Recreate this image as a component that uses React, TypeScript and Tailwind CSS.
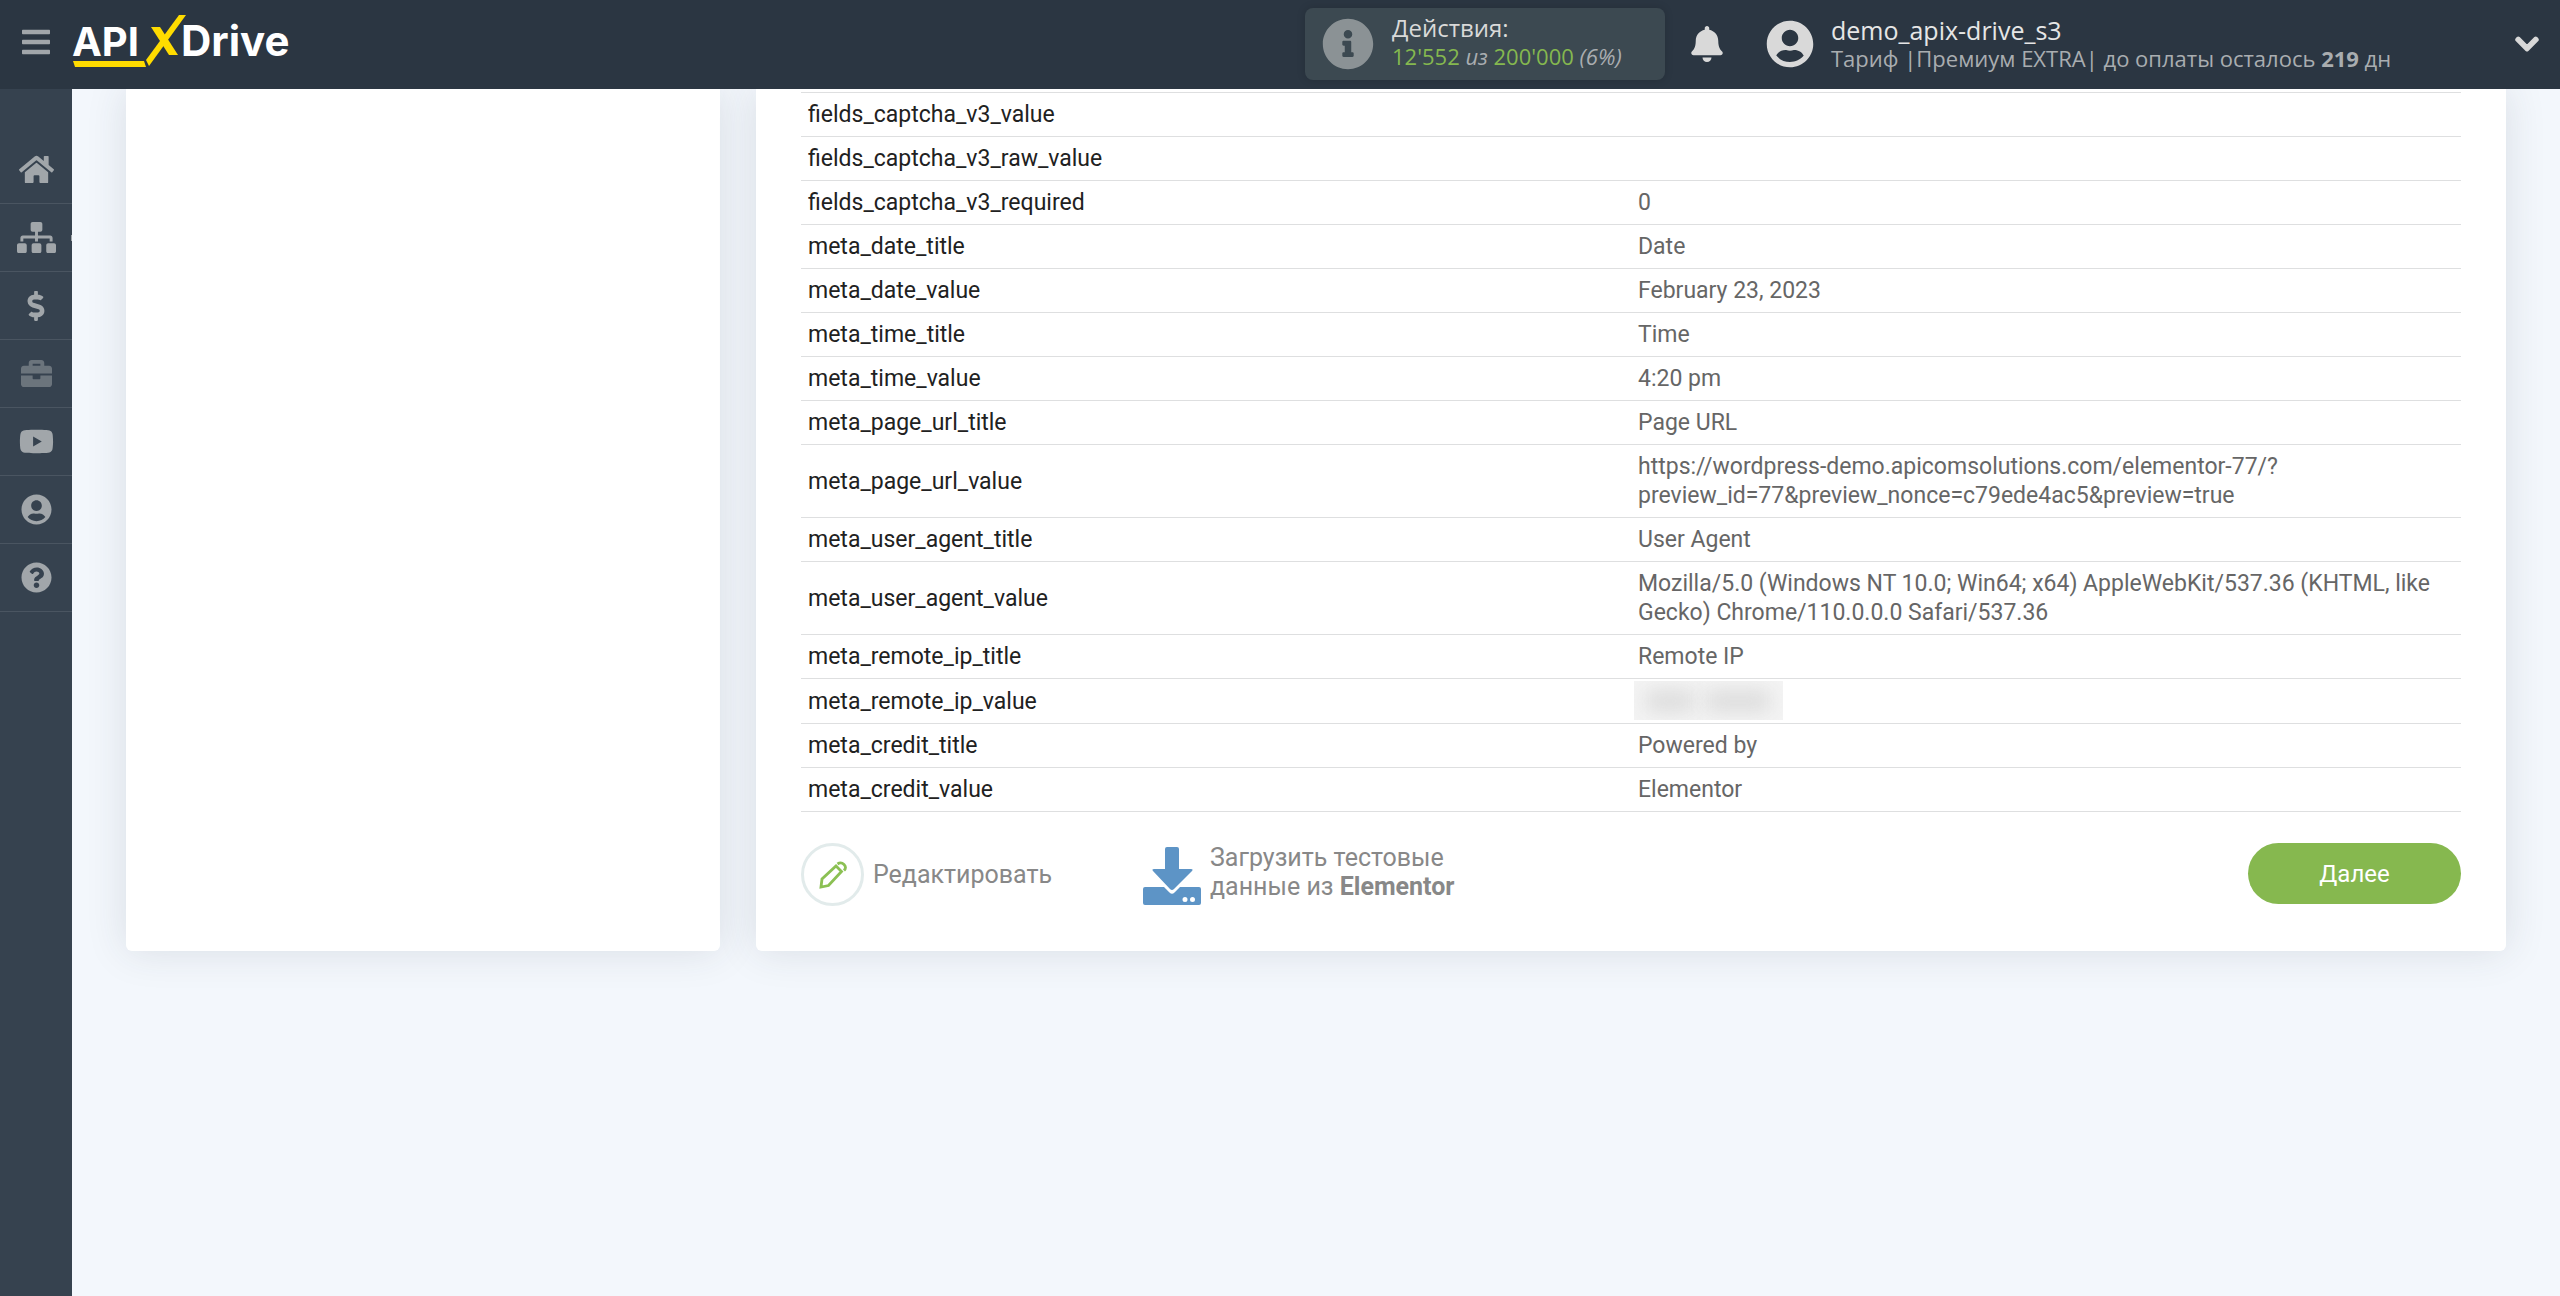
import React from "react";
import {
  FaBars,
  FaBell,
  FaBriefcase,
  FaChevronDown,
  FaDollarSign,
  FaHome,
  FaInfoCircle,
  FaQuestionCircle,
  FaSitemap,
  FaUserCircle,
  FaYoutube,
} from "react-icons/fa";

const rows: { name: string; value: string; hidden?: boolean }[] = [
  { name: "fields_captcha_v3_value", value: "" },
  { name: "fields_captcha_v3_raw_value", value: "" },
  { name: "fields_captcha_v3_required", value: "0" },
  { name: "meta_date_title", value: "Date" },
  { name: "meta_date_value", value: "February 23, 2023" },
  { name: "meta_time_title", value: "Time" },
  { name: "meta_time_value", value: "4:20 pm" },
  { name: "meta_page_url_title", value: "Page URL" },
  {
    name: "meta_page_url_value",
    value:
      "https://wordpress-demo.apicomsolutions.com/elementor-77/?preview_id=77&preview_nonce=c79ede4ac5&preview=true",
  },
  { name: "meta_user_agent_title", value: "User Agent" },
  {
    name: "meta_user_agent_value",
    value:
      "Mozilla/5.0 (Windows NT 10.0; Win64; x64) AppleWebKit/537.36 (KHTML, like Gecko) Chrome/110.0.0.0 Safari/537.36",
  },
  { name: "meta_remote_ip_title", value: "Remote IP" },
  { name: "meta_remote_ip_value", value: "", hidden: true },
  { name: "meta_credit_title", value: "Powered by" },
  { name: "meta_credit_value", value: "Elementor" },
];

const navItems = [
  { label: "Главная", icon: <FaHome size={35} /> },
  { label: "Связи", icon: <FaSitemap size={39} />, submenu: true },
  { label: "Оплата", icon: <FaDollarSign size={30} /> },
  { label: "Услуги", icon: <FaBriefcase size={31} className="opacity-50" /> },
  { label: "Видео", icon: <FaYoutube size={35} /> },
  { label: "Профиль", icon: <FaUserCircle size={31} /> },
  { label: "Помощь", icon: <FaQuestionCircle size={31} /> },
];

function Logo() {
  return (
    <svg width="224" height="54" viewBox="0 0 224 54" role="img" aria-label="APIXDrive">
      <g fill="#fff" fontFamily="Inter, sans-serif" fontWeight="700">
        <text x="0" y="41" fontSize="40">API</text>
        <text x="109" y="41" fontSize="42">Drive</text>
      </g>
      <g fill="#ffdc00">
        <path d="M1 46h71l2 6H3z" />
        <path d="M107 0h7L77 51l-3-6z" />
        <path d="M79 12h9l18 28h-9z" />
      </g>
    </svg>
  );
}

function Header() {
  return (
    <header className="sticky top-0 z-10 flex h-[89px] items-center bg-[#2b3642] pb-px font-['Open_Sans','Noto_Sans',sans-serif]">
      <button aria-label="Меню" className="flex w-[72px] justify-center pb-1 text-[#a1a6aa]">
        <FaBars size={32} />
      </button>
      <a href="#" className="pb-1">
        <Logo />
      </a>
      <div className="ml-auto flex h-[72px] w-[360px] items-center gap-[18px] rounded-lg bg-[#3c4951] pl-[17px] shadow-[0_0_8px_rgba(0,0,0,0.15)]">
        <FaInfoCircle size={52} className="text-[#8b9295]" />
        <div className="pb-1 leading-[29px] whitespace-nowrap">
          <div className="text-2xl leading-[29px] text-[#d9d9d9]">Действия:</div>
          <div className="text-[22px] text-[#85b84f]">
            12'552 <i className="text-[#a9adb0]">из</i> 200'000{" "}
            <i className="text-[#a9adb0]">(6%)</i>
          </div>
        </div>
      </div>
      <button aria-label="Уведомления" className="ml-6 text-[#d9d9d9]">
        <FaBell size={36} />
      </button>
      <div className="ml-[41px] flex items-center gap-[17px]">
        <FaUserCircle size={48} className="text-[#d9d9d9]" />
        <div className="w-[683px] whitespace-nowrap">
          <div className="text-[25px] leading-7 text-[#e6e6e6]">demo_apix-drive_s3</div>
          <div className="text-[22px] leading-7 text-[#a9adb0]">
            Тариф |Премиум EXTRA| до оплаты осталось <b>219</b> дн
          </div>
        </div>
      </div>
      <button aria-label="Открыть меню профиля" className="mr-5 text-[#d9d9d9]">
        <FaChevronDown size={26} strokeWidth={30} stroke="currentColor" />
      </button>
    </header>
  );
}

function Sidebar() {
  return (
    <nav className="w-[72px] shrink-0 bg-[#36424f] pt-[47px] text-[#a1a6aa]">
      {navItems.map((item) => (
        <a
          key={item.label}
          href="#"
          aria-label={item.label}
          className="relative flex h-[68px] items-center justify-center border-b border-[#4a5561]"
        >
          {item.icon}
          {item.submenu && <span className="absolute right-0 h-[6px] w-px bg-[#a1a6aa]" />}
        </a>
      ))}
    </nav>
  );
}

function HiddenValue() {
  return (
    <div className="-mt-[5px] -mb-1 -ml-1 flex h-[39px] w-[149px] items-center gap-3 overflow-hidden bg-[#f4f4f4] px-3">
      <div className="h-5 w-12 bg-[#dadada] blur-[10px]" />
      <div className="h-5 w-16 bg-[#dadada] blur-[10px]" />
    </div>
  );
}

function DataTable() {
  return (
    <table className="w-full table-fixed border-t border-[#dedfe0] text-[23px] leading-[29px]">
      <tbody>
        {rows.map((row) => (
          <tr key={row.name} className="border-b border-[#dedfe0]">
            <th scope="row" className="w-1/2 px-[7px] py-[7px] text-left font-normal text-[#212121]">
              {row.name}
            </th>
            <td className="px-[7px] py-[7px] text-[#666]">
              {row.hidden ? <HiddenValue /> : row.value}
            </td>
          </tr>
        ))}
      </tbody>
    </table>
  );
}

function PencilIcon() {
  return (
    <svg width="28" height="28" viewBox="0 0 28 28" fill="none" stroke="#8bc053" strokeWidth="2.8">
      <path d="M2 26l1-8L17 5l5.500 5.500L9.500 24.500z" />
      <path d="M18.500 3q3.500-2.500 6.500 0.500t0 6" />
    </svg>
  );
}

function DownloadIcon() {
  return (
    <svg width="59" height="58" viewBox="0 0 59 58" fill="#5d94c6">
      <path d="M24 0h10q2 0 2 2v20h12q2.500 0 1 2L31 42q-2 2-4 0L10 24q-1.500-2 1-2h11V2q0-2 2-2z" />
      <path
        fillRule="evenodd"
        d="M2 40h19l5.500 5.500q2.500 2.500 5 0L37 40h19q2 0 2 2v14q0 2-2 2H2q-2 0-2-2V42q0-2 2-2zM42 50a2.500 2.500 0 1 0 0 5 2.500 2.500 0 0 0 0-5zM49.500 50a2.500 2.500 0 1 0 0 5 2.500 2.500 0 0 0 0-5z"
      />
    </svg>
  );
}

export default function App() {
  return (
    <div className="flex min-h-screen flex-col bg-[#f3f7fc] font-[Roboto,sans-serif]">
      <Header />
      <div className="flex grow">
        <Sidebar />
        <main className="flex grow items-stretch gap-9 self-start pr-[54px] pl-[54px]">
          <section className="w-[594px] shrink-0 rounded-b-md bg-white shadow-[0_0_40px_rgba(43,54,66,0.13)]" />
          <section className="grow rounded-b-md bg-white px-[45px] pt-[3px] pb-[45px] shadow-[0_0_40px_rgba(43,54,66,0.13)]">
            <DataTable />
            <div className="mt-[31px] flex items-start text-[25px] leading-[29px] text-[#888]">
              <button className="flex w-[342px] items-center gap-[9px]">
                <span className="flex size-[63px] items-center justify-center rounded-full border-[3px] border-[#e2ebeb]">
                  <PencilIcon />
                </span>
                Редактировать
              </button>
              <button className="flex h-[62px] items-end gap-2 text-left">
                <DownloadIcon />
                <span className="mb-1">
                  Загрузить тестовые
                  <br />
                  данные из <b>Elementor</b>
                </span>
              </button>
              <button className="ml-auto h-[61px] w-[213px] rounded-full bg-[#86b84f] text-2xl text-white">
                Далее
              </button>
            </div>
          </section>
        </main>
      </div>
    </div>
  );
}
